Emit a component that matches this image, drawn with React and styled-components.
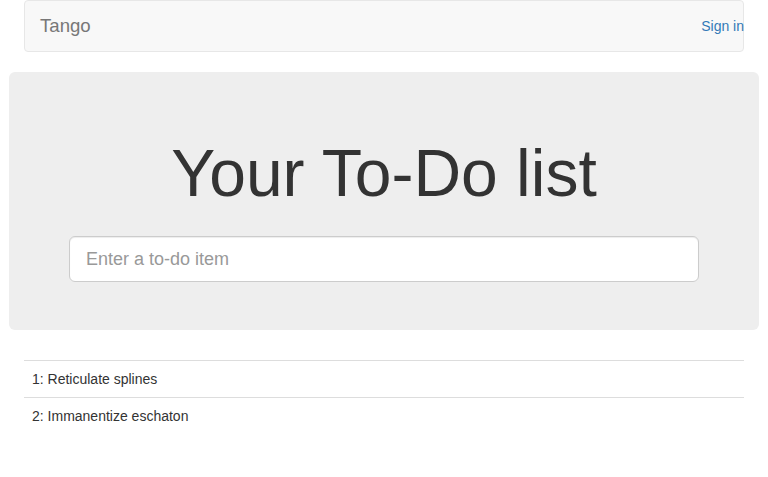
import React from "react";
import styled, { createGlobalStyle } from "styled-components";

const Global = createGlobalStyle`
  html, body { margin: 0; padding: 0; background: #fff; }
  body {
    font-family: "Liberation Sans", Helvetica, Arial, sans-serif;
    font-size: 14px;
    line-height: 1.42857143;
    color: #333;
  }
  * { box-sizing: border-box; }
`;

const Container = styled.div`
  width: 750px;
  margin: 0 auto;
  padding: 0 15px;
`;

const Navbar = styled.nav`
  height: 52px;
  display: flex;
  align-items: center;
  justify-content: space-between;
  padding: 0 0 0 15px;
  background: #f8f8f8;
  border: 1px solid #e7e7e7;
  border-radius: 4px;
  margin-bottom: 20px;
`;

const Brand = styled.a`
  font-size: 18.6px;
  line-height: 20px;
  color: #777;
  text-decoration: none;
`;

const NavLink = styled.a`
  font-size: 14px;
  line-height: 20px;
  color: #337ab7;
  text-decoration: none;
  margin-right: -1px;
`;

const Jumbotron = styled.section`
  margin: 0 -15px 30px;
  padding: 48px 60px;
  background: #eee;
  border-radius: 6px;
  text-align: center;
`;

const Title = styled.h1`
  font-size: 66px;
  line-height: 69px;
  font-weight: 500;
  margin: 19px 0 28px;
  color: #333;
`;

const Input = styled.input`
  display: block;
  width: 100%;
  height: 46px;
  padding: 10px 16px;
  font-family: inherit;
  font-size: 18px;
  line-height: 1.3333333;
  color: #555;
  background: #fff;
  border: 1px solid #ccc;
  border-radius: 6px;
  box-shadow: inset 0 1px 1px rgba(0, 0, 0, 0.075);
  outline: none;
  &::placeholder { color: #999; }
`;

const List = styled.ul`
  list-style: none;
  margin: 0;
  padding: 0;
`;

const Item = styled.li`
  padding: 8px;
  line-height: 20px;
  border-top: 1px solid #ddd;
`;

const items = ["Reticulate splines", "Immanentize eschaton"];

export default function App() {
  return (
    <>
      <Global />
      <Container>
        <Navbar>
          <Brand href="#">Tango</Brand>
          <NavLink href="#">Sign in</NavLink>
        </Navbar>
        <Jumbotron>
          <Title>Your To-Do list</Title>
          <Input placeholder="Enter a to-do item" />
        </Jumbotron>
        <List>
          {items.map((t, i) => (
            <Item key={i}>{i + 1}: {t}</Item>
          ))}
        </List>
      </Container>
    </>
  );
}
